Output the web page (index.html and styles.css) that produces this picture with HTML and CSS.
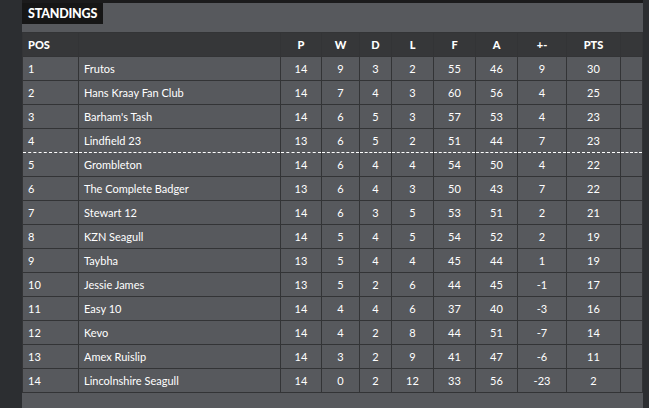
FILE: index.html
```html
<!DOCTYPE html>
<html>
<head>
<meta charset="utf-8">
<link rel="stylesheet" href="styles.css">
</head>
<body>
<div class="page">
  <div class="panel">
    <div class="tab">STANDINGS</div>
    <table class="standings">
      <colgroup>
        <col class="c-pos"><col class="c-name"><col class="c-p"><col class="c-w"><col class="c-d"><col class="c-l"><col class="c-f"><col class="c-a"><col class="c-gd"><col class="c-pts"><col class="c-x">
      </colgroup>
      <thead>
        <tr><th class="left">POS</th><th></th><th>P</th><th>W</th><th>D</th><th>L</th><th>F</th><th>A</th><th>+-</th><th>PTS</th><th></th></tr>
      </thead>
      <tbody>
        <tr><td class="left">1</td><td class="left">Frutos</td><td>14</td><td>9</td><td>3</td><td>2</td><td>55</td><td>46</td><td>9</td><td>30</td><td></td></tr>
        <tr><td class="left">2</td><td class="left">Hans Kraay Fan Club</td><td>14</td><td>7</td><td>4</td><td>3</td><td>60</td><td>56</td><td>4</td><td>25</td><td></td></tr>
        <tr><td class="left">3</td><td class="left">Barham's Tash</td><td>14</td><td>6</td><td>5</td><td>3</td><td>57</td><td>53</td><td>4</td><td>23</td><td></td></tr>
        <tr class="cut"><td class="left">4</td><td class="left">Lindfield 23</td><td>13</td><td>6</td><td>5</td><td>2</td><td>51</td><td>44</td><td>7</td><td>23</td><td></td></tr>
        <tr class="after-cut"><td class="left">5</td><td class="left">Grombleton</td><td>14</td><td>6</td><td>4</td><td>4</td><td>54</td><td>50</td><td>4</td><td>22</td><td></td></tr>
        <tr><td class="left">6</td><td class="left">The Complete Badger</td><td>13</td><td>6</td><td>4</td><td>3</td><td>50</td><td>43</td><td>7</td><td>22</td><td></td></tr>
        <tr><td class="left">7</td><td class="left">Stewart 12</td><td>14</td><td>6</td><td>3</td><td>5</td><td>53</td><td>51</td><td>2</td><td>21</td><td></td></tr>
        <tr><td class="left">8</td><td class="left">KZN Seagull</td><td>14</td><td>5</td><td>4</td><td>5</td><td>54</td><td>52</td><td>2</td><td>19</td><td></td></tr>
        <tr><td class="left">9</td><td class="left">Taybha</td><td>13</td><td>5</td><td>4</td><td>4</td><td>45</td><td>44</td><td>1</td><td>19</td><td></td></tr>
        <tr><td class="left">10</td><td class="left">Jessie James</td><td>13</td><td>5</td><td>2</td><td>6</td><td>44</td><td>45</td><td>-1</td><td>17</td><td></td></tr>
        <tr><td class="left">11</td><td class="left">Easy 10</td><td>14</td><td>4</td><td>4</td><td>6</td><td>37</td><td>40</td><td>-3</td><td>16</td><td></td></tr>
        <tr><td class="left">12</td><td class="left">Kevo</td><td>14</td><td>4</td><td>2</td><td>8</td><td>44</td><td>51</td><td>-7</td><td>14</td><td></td></tr>
        <tr><td class="left">13</td><td class="left">Amex Ruislip</td><td>14</td><td>3</td><td>2</td><td>9</td><td>41</td><td>47</td><td>-6</td><td>11</td><td></td></tr>
        <tr><td class="left">14</td><td class="left">Lincolnshire Seagull</td><td>14</td><td>0</td><td>2</td><td>12</td><td>33</td><td>56</td><td>-23</td><td>2</td><td></td></tr>
      </tbody>
    </table>
  </div>
</div>
</body>
</html>
```
FILE: styles.css
```css
html, body {
  margin: 0;
  padding: 0;
  background: #2c2e31;
  height: 100%;
}
.page {
  display: flex;
  padding-left: 22px;
  width: 627px;
  height: 408px;
  overflow: hidden;
}
.panel {
  width: 621px;
  height: 405px;
  background: #57595d;
  border-top: 3px solid #1b1b1c;
  font-family: "Lato", "Noto Sans", sans-serif;
  color: #ffffff;
}
.tab {
  display: block;
  width: fit-content;
  background: #161616;
  height: 21px;
  line-height: 21px;
  padding: 0 6px;
  font-size: 12.5px;
  font-weight: 900;
  letter-spacing: -0.2px;
}
.standings {
  margin-top: 8px;
  width: 620px;
  border-collapse: collapse;
  table-layout: fixed;
  font-size: 11px;
}
.c-pos { width: 56px; }
.c-name { width: 202px; }
.c-p { width: 41px; }
.c-w { width: 38px; }
.c-d { width: 32px; }
.c-l { width: 42px; }
.c-f { width: 42px; }
.c-a { width: 42px; }
.c-gd { width: 49px; }
.c-pts { width: 54px; }
.c-x { width: 22px; }
.standings th,
.standings td {
  border: 1px solid #333436;
  height: 23px;
  padding: 0 5px;
  text-align: center;
  vertical-align: middle;
  white-space: nowrap;
}
.standings th {
  background: #363739;
  font-weight: 900;
}
.standings .left {
  text-align: left;
}
.standings tr.cut td {
  border-bottom: 1px dashed #ffffff;
}
.standings tr.after-cut td {
  border-top: 1px dashed #ffffff;
}
```
